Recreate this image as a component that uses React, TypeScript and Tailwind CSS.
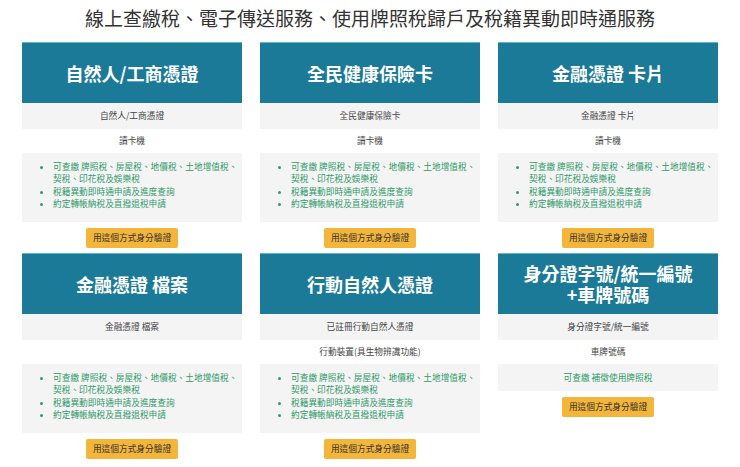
const font = { fontFamily: '"Noto Sans CJK TC", "Noto Sans", sans-serif' };

type Card = {
  title: string[];
  device: string;
  reader: string;
  items?: string[];
  single?: string;
};

const fullItems = [
  "可查繳 牌照稅、房屋稅、地價稅、土地增值稅、契稅、印花稅及娛樂稅",
  "稅籍異動即時通申請及進度查詢",
  "約定轉帳納稅及直撥退稅申請",
];

const cards: Card[] = [
  { title: ["自然人/工商憑證"], device: "自然人/工商憑證", reader: "讀卡機", items: fullItems },
  { title: ["全民健康保險卡"], device: "全民健康保險卡", reader: "讀卡機", items: fullItems },
  { title: ["金融憑證 卡片"], device: "金融憑證 卡片", reader: "讀卡機", items: fullItems },
  { title: ["金融憑證 檔案"], device: "金融憑證 檔案", reader: "", items: fullItems },
  { title: ["行動自然人憑證"], device: "已註冊行動自然人憑證", reader: "行動裝置(具生物辨識功能)", items: fullItems },
  { title: ["身分證字號/統一編號", "+車牌號碼"], device: "身分證字號/統一編號", reader: "車牌號碼", single: "可查繳 補徵使用牌照稅" },
];

function ServiceCard({ card }: { card: Card }) {
  return (
    <div className="flex flex-col">
      <div className="h-[61px] flex flex-col items-center justify-center bg-[#1b7a97] border-t border-[#5fb6d0] text-white font-bold text-[18px] leading-[21px]">
        {card.title.map((t) => (
          <span key={t}>{t}</span>
        ))}
      </div>
      <div className="h-[26px] flex items-center justify-center bg-[#f4f4f4] text-[8.7px] text-[#444]">
        {card.device}
      </div>
      <div className="h-[24px] flex items-center justify-center text-[8.7px] text-[#444]">
        {card.reader}
      </div>
      {card.items ? (
        <div className="bg-[#f4f4f4] pt-[8px] pb-[13px] pl-[31px] pr-[3px] h-[69px]">
          <ul className="list-disc text-[8.7px] leading-[12.3px] text-[#2f9a6b] marker:text-[#2f9a6b]">
            {card.items.map((it) => (
              <li key={it}>{it}</li>
            ))}
          </ul>
        </div>
      ) : (
        <div className="h-[27px] flex items-center justify-center bg-[#f4f4f4] text-[8.7px] text-[#2f9a6b]">
          {card.single}
        </div>
      )}
      <div className="flex justify-center pt-[6px] pb-[5px]">
        <div className="h-[20px] w-[92px] flex items-center justify-center rounded-[2px] bg-[#f4b63a] text-[8.7px] text-[#333]">
          用這個方式身分驗證
        </div>
      </div>
    </div>
  );
}

export default function App() {
  return (
    <div className="w-[740px] h-[467px] bg-white overflow-hidden" style={font}>
      <h1 className="h-[42px] flex items-center justify-center text-[19px] text-[#333] pb-[6px]">
        線上查繳稅、電子傳送服務、使用牌照稅歸戶及稅籍異動即時通服務
      </h1>
      <div className="mx-auto w-[696px] grid grid-cols-3 gap-x-[18px] gap-y-0">
        {cards.map((c) => (
          <ServiceCard key={c.device + c.title[0]} card={c} />
        ))}
      </div>
    </div>
  );
}
